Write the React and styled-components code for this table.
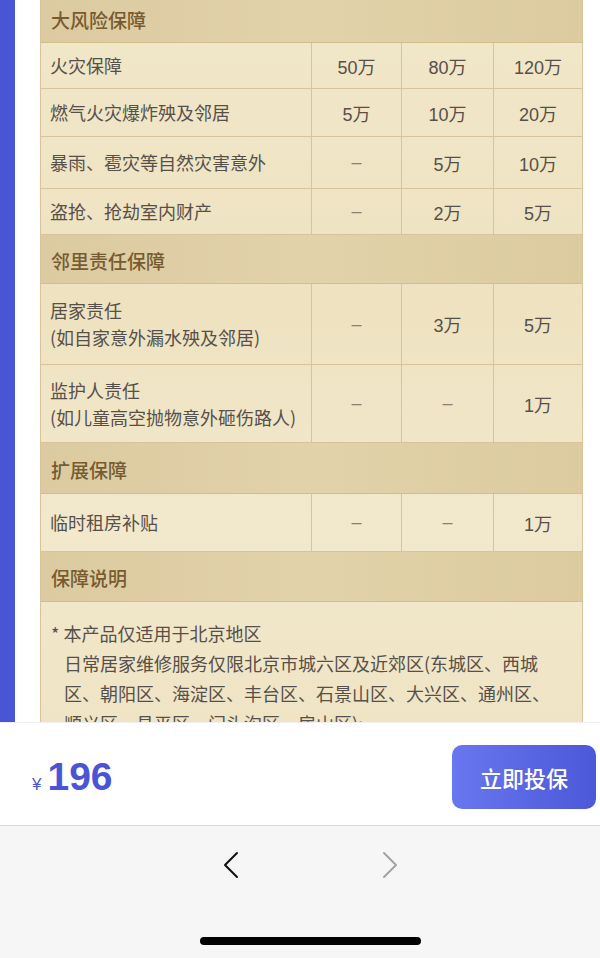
import React from 'react'
import styled, { createGlobalStyle } from 'styled-components'

const GlobalStyle = createGlobalStyle`
  html, body {
    margin: 0;
    padding: 0;
    background: #ffffff;
  }
  body {
    font-family: "Noto Sans CJK SC", "Noto Sans", "Liberation Sans", sans-serif;
  }
`

const sections = [
  {
    title: '大风险保障',
    h: 49,
    rows: [
      { label: '火灾保障', vals: ['50万', '80万', '120万'], h: 46 },
      { label: '燃气火灾爆炸殃及邻居', vals: ['5万', '10万', '20万'], h: 48 },
      { label: '暴雨、雹灾等自然灾害意外', vals: ['–', '5万', '10万'], h: 52 },
      { label: '盗抢、抢劫室内财产', vals: ['–', '2万', '5万'], h: 46 },
    ],
  },
  {
    title: '邻里责任保障',
    h: 49,
    rows: [
      { label: '居家责任', sub: '(如自家意外漏水殃及邻居)', vals: ['–', '3万', '5万'], h: 81 },
      { label: '监护人责任', sub: '(如儿童高空抛物意外砸伤路人)', vals: ['–', '–', '1万'], h: 78 },
    ],
  },
  {
    title: '扩展保障',
    h: 51,
    rows: [{ label: '临时租房补贴', vals: ['–', '–', '1万'], h: 58 }],
  },
]

const notes = [
  '* 本产品仅适用于北京地区',
  '日常居家维修服务仅限北京市城六区及近郊区(东城区、西城',
  '区、朝阳区、海淀区、丰台区、石景山区、大兴区、通州区、',
  '顺义区、昌平区、门头沟区、房山区);',
]

const App = () => {
  return (
    <Page>
      <GlobalStyle />
      <Viewport>
        <SideStrip />
        <Content>
          <Table>
            {sections.map(sec => (
              <React.Fragment key={sec.title}>
                <SectionHead h={sec.h}>{sec.title}</SectionHead>
                {sec.rows.map(row => (
                  <React.Fragment key={row.label}>
                    <LabelCell h={row.h}>
                      <span>{row.label}</span>
                      {row.sub && <span>{row.sub}</span>}
                    </LabelCell>
                    {row.vals.map((v, i) => (
                      <ValueCell key={i} h={row.h} dash={v === '–'} last={i === 2}>
                        {v}
                      </ValueCell>
                    ))}
                  </React.Fragment>
                ))}
              </React.Fragment>
            ))}
            <SectionHead h={50}>保障说明</SectionHead>
            <Notes>
              {notes.map((n, i) => (
                <NoteLine key={i} indent={i > 0}>{n}</NoteLine>
              ))}
            </Notes>
          </Table>
        </Content>
      </Viewport>

      <BuyBar>
        <Price>
          <Currency>¥</Currency>
          <Amount>196</Amount>
        </Price>
        <BuyButton>立即投保</BuyButton>
      </BuyBar>

      <BrowserBar>
        <NavRow>
          <NavArrow>
            <svg width="18" height="28" viewBox="0 0 18 28" fill="none">
              <path d="M15 2 L3 14 L15 26" stroke="#111" strokeWidth="2" strokeLinecap="round" strokeLinejoin="round" />
            </svg>
          </NavArrow>
          <NavArrow>
            <svg width="18" height="28" viewBox="0 0 18 28" fill="none">
              <path d="M3 2 L15 14 L3 26" stroke="#a3a3a3" strokeWidth="2" strokeLinecap="round" strokeLinejoin="round" />
            </svg>
          </NavArrow>
        </NavRow>
        <HomeIndicator />
      </BrowserBar>
    </Page>
  )
}

const Page = styled.div`
  width: 600px;
  height: 958px;
  display: flex;
  flex-direction: column;
  overflow: hidden;
`

const Viewport = styled.div`
  height: 722px;
  display: flex;
  flex-direction: row;
  overflow: hidden;
  flex-shrink: 0;
`

const SideStrip = styled.div`
  width: 15px;
  background: #4a55d6;
  flex-shrink: 0;
`

const Content = styled.div`
  flex: 1;
  padding: 0 19px 0 25px;
  background: #ffffff;
`

const Table = styled.div`
  margin-top: -6px;
  display: grid;
  grid-template-columns: 271px 90px 92px 88px;
  background: linear-gradient(180deg, #f1e7ca 0%, #eee2c0 40%, #f2e8cc 70%, #efe3c3 100%);
  border-left: 1px solid #d8c49a;
  border-right: 1px solid #d8c49a;
  box-sizing: border-box;
`

const SectionHead = styled.div`
  grid-column: 1 / -1;
  height: ${p => p.h}px;
  box-sizing: border-box;
  display: flex;
  align-items: center;
  padding: 2px 0 0 10px;
  background: linear-gradient(90deg, #dccaa0 0%, #e2d2aa 50%, #dccb9f 100%);
  color: #765b30;
  font-size: 19px;
  font-weight: 500;
  border-bottom: 1px solid #d3bd8f;
`

const LabelCell = styled.div`
  height: ${p => p.h}px;
  box-sizing: border-box;
  display: flex;
  flex-direction: column;
  justify-content: center;
  padding-left: 9px;
  color: #57504a;
  font-size: 18px;
  line-height: 27px;
  border-right: 1px solid #d8c49a;
  border-bottom: 1px solid #d8c49a;
  white-space: nowrap;
`

const ValueCell = styled.div`
  height: ${p => p.h}px;
  box-sizing: border-box;
  display: flex;
  align-items: center;
  justify-content: center;
  color: ${p => (p.dash ? '#8b8172' : '#57504a')};
  font-family: "Liberation Sans", "Noto Sans CJK SC", sans-serif;
  font-size: 18px;
  border-right: ${p => (p.last ? 'none' : '1px solid #d8c49a')};
  border-bottom: 1px solid #d8c49a;
`

const Notes = styled.div`
  grid-column: 1 / -1;
  padding: 16px 0 20px 10px;
  color: #55504a;
  font-size: 18px;
  line-height: 30px;
`

const NoteLine = styled.div`
  padding-left: ${p => (p.indent ? '13px' : '0')};
  white-space: nowrap;
`

const BuyBar = styled.div`
  height: 104px;
  flex-shrink: 0;
  box-sizing: border-box;
  display: flex;
  align-items: center;
  justify-content: space-between;
  padding: 0 4px 0 32px;
  background: #ffffff;
  border-top: 1px solid #eeeeee;
  border-bottom: 1px solid #d9d9d9;
`

const Price = styled.div`
  display: flex;
  align-items: baseline;
  margin-top: 6px;
  color: #4a55d6;
  font-family: "Liberation Sans", sans-serif;
`

const Currency = styled.span`
  font-size: 17px;
  margin-right: 6px;
`

const Amount = styled.span`
  font-size: 39px;
  font-weight: 700;
`

const BuyButton = styled.button`
  width: 144px;
  height: 64px;
  border: none;
  border-radius: 10px;
  background: linear-gradient(90deg, #6877ef 0%, #4c58d8 100%);
  color: #ffffff;
  font-family: "Noto Sans CJK SC", sans-serif;
  font-size: 22px;
  font-weight: 500;
  margin-top: 6px;
`

const BrowserBar = styled.div`
  flex: 1;
  background: #f6f6f6;
  display: flex;
  flex-direction: column;
  align-items: center;
`

const NavRow = styled.div`
  display: flex;
  gap: 141px;
  margin-top: 25px;
  margin-left: 21px;
`

const NavArrow = styled.div`
  width: 18px;
  height: 28px;
  display: flex;
`

const HomeIndicator = styled.div`
  width: 221px;
  height: 8px;
  border-radius: 4px;
  background: #000000;
  margin-top: 58px;
  margin-left: 21px;
`

export default App
